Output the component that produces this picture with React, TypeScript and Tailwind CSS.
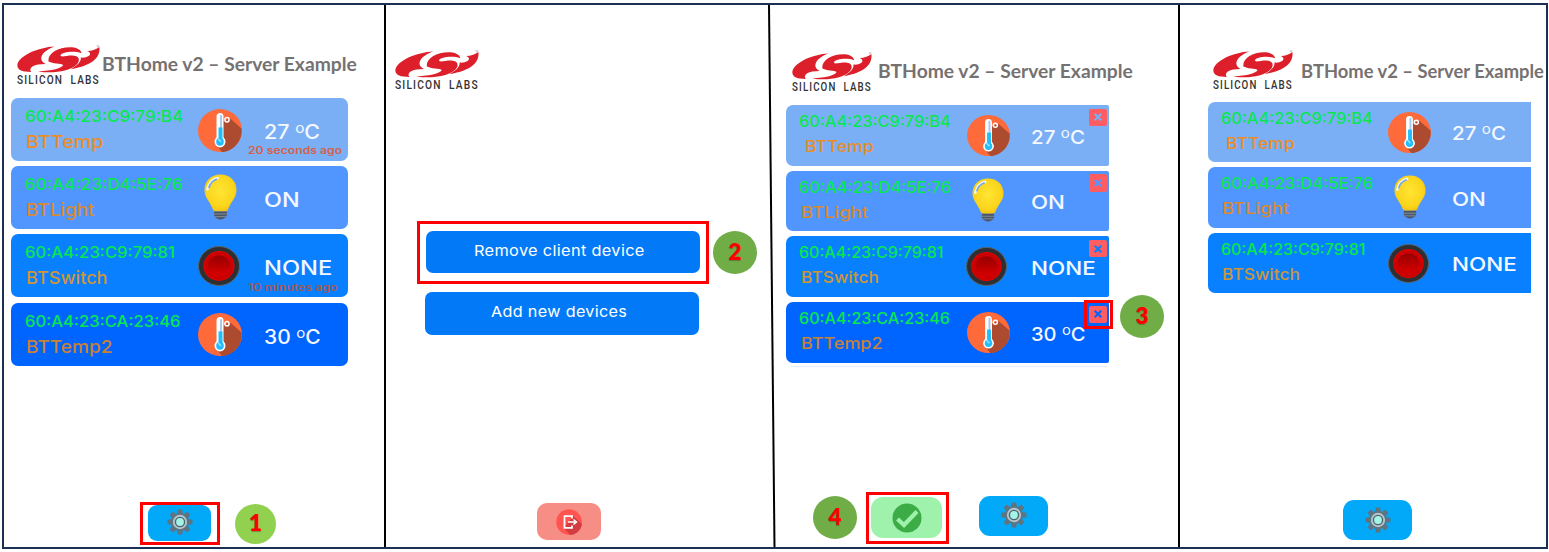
import { useLayoutEffect, useRef, useState } from "react";
import type { ReactNode } from "react";

/* Text stretched horizontally so that it fills an exact width. */
function Fit({ w, className = "", children }: { w: number; className?: string; children: ReactNode }) {
  const ref = useRef<HTMLSpanElement>(null);
  const [scale, setScale] = useState(1);
  useLayoutEffect(() => {
    if (ref.current) setScale(w / ref.current.offsetWidth);
  }, [w]);
  return (
    <div style={{ width: w }} className={"whitespace-nowrap " + className}>
      <span ref={ref} className="inline-block origin-left" style={{ transform: `scaleX(${scale})` }}>
        {children}
      </span>
    </div>
  );
}

function Logo({ w }: { w: number }) {
  return (
    <div className="flex shrink-0 flex-col" style={{ width: w }}>
      <svg viewBox="25 8 250 87" preserveAspectRatio="none" className="h-[28px] w-full">
        <g fill="#dc1f2b">
          <path d="M138 13C92 15 27 42 26 72C27 87 42 92 68 92C58 78 76 67 112 67C94 60 86 34 138 13Z" />
          <path d="M120 59C116 34 150 13 190 15C209 17 219 25 219 34C198 25 160 30 156 40C156 47 172 41 192 41C218 42 214 62 202 71C182 91 130 97 88 90C132 88 160 80 164 71C163 64 144 69 120 59Z" />
          <path d="M273 14C277 42 258 70 187 83C209 70 219 58 217 47C244 50 254 32 236 27C252 26 265 21 273 14Z" />
        </g>
        <circle cx="269" cy="11" r="3" fill="none" stroke="#999" strokeWidth="1.5" />
      </svg>
      <Fit w={w} className="mt-[1px] h-[12px] font-['Roboto'] text-[13px] leading-[12px] font-medium tracking-[1.5px] text-[#333]">
        SILICON&nbsp;&nbsp;LABS
      </Fit>
    </div>
  );
}

function Title({ w, className = "" }: { w: number; className?: string }) {
  return (
    <Fit w={w} className={"h-6 font-['Lato'] text-[18.5px] leading-6 font-bold text-[#767171] " + className}>
      BTHome v2 – Server Example
    </Fit>
  );
}

function Thermometer() {
  return (
    <svg viewBox="0 0 44 42" preserveAspectRatio="none" className="h-full w-full">
      <ellipse cx="22" cy="21" rx="22" ry="21" fill="#ff6a3a" />
      <path d="M32 9L43.500 19C45 31 35 41.500 24 42L18 35L25 27L25 12Z" fill="#ad4b31" />
      <rect x="18.500" y="4" width="7" height="28" rx="3.500" fill="#fff" />
      <circle cx="22" cy="32" r="5.500" fill="#fff" />
      <rect x="22" y="6" width="2" height="14" fill="#a9c9ee" />
      <rect x="20.500" y="18" width="4" height="14" fill="#22bdfb" />
      <circle cx="22" cy="32" r="3.800" fill="#22bdfb" />
      <path d="M20 29l3 3" stroke="#9ae4ff" strokeWidth="1.500" />
      <circle cx="29" cy="10.500" r="2.100" fill="none" stroke="#fff" strokeWidth="1.500" />
    </svg>
  );
}

function Bulb() {
  return (
    <svg viewBox="0 0 34 46" preserveAspectRatio="none" className="h-full w-full">
      <defs>
        <radialGradient id="glass" cx="0.5" cy="0.45" r="0.6">
          <stop offset="0" stopColor="#ffe533" />
          <stop offset="0.7" stopColor="#fbd51c" />
          <stop offset="1" stopColor="#edbd13" />
        </radialGradient>
      </defs>
      <path d="M17 0.500C7 0.500 0.500 7 0.500 16C0.500 24 6 27 9 35Q10 37.500 12 37.500H22Q24 37.500 25 35C28 27 33.500 24 33.500 16C33.500 7 27 0.500 17 0.500Z" fill="url(#glass)" />
      <path d="M3.500 15.500Q5.500 6 14 4" fill="none" stroke="#eef6ff" strokeWidth="2.600" strokeLinecap="round" />
      <path d="M5 14Q6.500 7.500 13.500 5" fill="none" stroke="#7aa7e0" strokeWidth="1.800" />
      <path d="M10.500 37.500H23.500V41.500Q23 43.500 20.500 44.500Q17 46.500 13.500 44.500Q11 43.500 10.500 41.500Z" fill="#4a5568" />
      <path d="M10.500 40H23.500M11 42.700H23" stroke="#85909b" strokeWidth="1" />
    </svg>
  );
}

function PushButton() {
  return (
    <svg viewBox="0 0 42 40" preserveAspectRatio="none" className="h-full w-full">
      <defs>
        <linearGradient id="cap" x1="0" y1="0" x2="0" y2="1">
          <stop offset="0" stopColor="#960000" />
          <stop offset="1" stopColor="#d80000" />
        </linearGradient>
      </defs>
      <ellipse cx="21" cy="20" rx="20.500" ry="19.500" fill="#2c3032" stroke="#5b6266" strokeWidth="1" />
      <ellipse cx="21" cy="20" rx="15.600" ry="15" fill="#e00505" />
      <ellipse cx="21" cy="20" rx="14.600" ry="14" fill="#cc0000" />
      <ellipse cx="21" cy="19.500" rx="11" ry="10" fill="url(#cap)" />
    </svg>
  );
}

function Gear() {
  const teeth = [0, 45, 90, 135, 180, 225, 270, 315];
  return (
    <svg viewBox="-13 -13 26 26" className="h-[26px] w-[26px]">
      <g fill="#5d7583">
        {teeth.map((a) => (
          <path key={a} d="M-3 -7.500L-2.200 -12.500H2.200L3 -7.500Z" transform={`rotate(${a})`} />
        ))}
        <circle r="9" />
      </g>
      <circle r="6.200" fill="#4c6470" stroke="#b4c5cb" strokeWidth="1.900" />
      <circle r="3.900" fill="#a2f5e6" />
    </svg>
  );
}

type Device = { mac: string; name: string; value: string; kind: string; bg: string; fg: string; nameColor: string };

const devices: Device[] = [
  { mac: "60:A4:23:C9:79:B4", name: "BTTemp", value: "27", kind: "temp", bg: "bg-[#7aaff5]", fg: "text-[#7aaff5]", nameColor: "text-[#e98d2b]" },
  { mac: "60:A4:23:D4:5E:76", name: "BTLight", value: "ON", kind: "light", bg: "bg-[#5196ff]", fg: "text-[#5196ff]", nameColor: "text-[#d9892f]" },
  { mac: "60:A4:23:C9:79:81", name: "BTSwitch", value: "NONE", kind: "switch", bg: "bg-[#0880ff]", fg: "text-[#0880ff]", nameColor: "text-[#cf9636]" },
  { mac: "60:A4:23:CA:23:46", name: "BTTemp2", value: "30", kind: "temp", bg: "bg-[#0064ff]", fg: "text-[#0064ff]", nameColor: "text-[#c98135]" },
];

const wideMac = [158, 158, 150, 156];
const wideName = [78, 69, 82, 86];
const wideValue = [56, 36, 68, 57];
const wideTime = ["20 seconds ago", "", "10 minutes ago", ""];
const slimMac = [152, 152, 145, 151];
const slimName = [69, 67, 78, 82];
const slimValue = [54, 34, 65, 55];

function Value({ d }: { d: Device }) {
  if (d.kind !== "temp") return <>{d.value}</>;
  return (
    <>
      {d.value} <span className="relative -top-[6px] text-[14px] leading-none font-normal">o</span>C
    </>
  );
}

function DeviceIcon({ kind, slim }: { kind: string; slim?: boolean }) {
  if (kind === "temp")
    return (
      <div className={slim ? "mt-[10px] h-[41px] w-[43px]" : "mt-[10.5px] h-[43px] w-[44px]"}>
        <Thermometer />
      </div>
    );
  if (kind === "light")
    return (
      <div className={slim ? "mt-[7.5px] ml-[5.5px] h-[44px] w-[32px]" : "mt-[8px] ml-[6px] h-[46px] w-[33px]"}>
        <Bulb />
      </div>
    );
  return (
    <div className={slim ? "mt-[11px] -ml-[0.5px] h-[39px] w-[41px]" : "mt-[11.5px] -ml-[0.5px] h-[40px] w-[42px]"}>
      <PushButton />
    </div>
  );
}

function WideCard({ d, i }: { d: Device; i: number }) {
  return (
    <div className={"flex h-[63px] w-[337px] rounded-[7px] " + d.bg}>
      <div className="ml-[14px] w-[173px] pt-[6px]">
        <Fit w={wideMac[i]} className="h-6 text-[16px] leading-6 font-medium text-[#08e84e]">{d.mac}</Fit>
        <Fit w={wideName[i]} className={"mt-[2px] ml-[0.5px] h-6 text-[17.5px] leading-6 font-medium " + d.nameColor}>{d.name}</Fit>
      </div>
      <div className="w-[50px]">
        <DeviceIcon kind={d.kind} />
      </div>
      <div className="pt-[22px]">
        <Fit w={wideValue[i]} className="ml-[15.5px] h-6 text-[19.5px] leading-6 font-medium text-[#f4f8ff]">
          <Value d={d} />
        </Fit>
        {wideTime[i] && (
          <Fit w={i === 0 ? 94 : 90} className={"h-3 text-[10px] leading-3 font-semibold " + (i === 0 ? "text-[#d65f49]" : "mt-px text-[#a3594f]")}>
            {wideTime[i]}
          </Fit>
        )}
      </div>
    </div>
  );
}

function SlimCard({ d, i, removable }: { d: Device; i: number; removable?: boolean }) {
  return (
    <div className={"relative flex h-[60.5px] w-[323px] rounded-l-[7px] " + (removable ? "rounded-r-[2px] " : "") + d.bg}>
      <div className="ml-[13px] w-[167.500px] pt-[5px]">
        <Fit w={slimMac[i]} className="h-6 text-[15.5px] leading-6 font-medium text-[#08e84e]">{d.mac}</Fit>
        <Fit w={slimName[i]} className={"h-6 text-[16px] leading-6 font-medium " + d.nameColor + (i === 0 ? " ml-[5.5px]" : " ml-[1.5px]")}>
          {d.name}
        </Fit>
      </div>
      <div className="w-[64px]">
        <DeviceIcon kind={d.kind} slim />
      </div>
      <Fit w={slimValue[i]} className="mt-[20.5px] h-6 text-[19px] leading-6 font-medium text-[#f4f8ff]">
        <Value d={d} />
      </Fit>
      {removable && (
        <div className={"absolute top-[3.5px] right-[2px] flex h-[17.5px] w-[18px] items-center justify-center rounded-[2px] bg-[#ff5d62] " + d.fg}>
          <svg viewBox="0 0 8 8" className="h-[8px] w-[8px]">
            <path d="M0.700 0.700L7.300 7.300M7.300 0.700L0.700 7.300" stroke="currentColor" strokeWidth="2.100" />
          </svg>
        </div>
      )}
    </div>
  );
}

function Step({ n, className }: { n: number; className: string }) {
  return (
    <div className={"absolute flex items-center justify-center rounded-[50%] pb-px font-['Lato'] text-[22.5px] leading-none font-extrabold text-[#fe0000] " + className}>
      <span className="[text-shadow:0_1px_1px_rgba(60,60,60,0.4)]">{n}</span>
    </div>
  );
}

function RedBox({ className }: { className: string }) {
  return <div className={"absolute border-[3px] border-[#fe0000] " + className} />;
}

export default function App() {
  return (
    <main className="h-[552px] w-[1549px] overflow-hidden bg-white pt-[3px] pl-[2px] font-['Inter',sans-serif]">
      <div className="flex h-[546px] w-[1546px] border-2 border-[#1b3054]">
        <section className="relative flex w-[380px] shrink-0 flex-col">
          <div className="flex pt-[40px] pl-[13px]">
            <Logo w={83} />
            <Title w={255} className="mt-[7px] ml-[1.5px]" />
          </div>
          <div className="mt-[12px] ml-[7px] flex flex-col gap-[5.2px]">
            {devices.map((d, i) => (
              <WideCard key={d.mac} d={d} i={i} />
            ))}
          </div>
          <button className="mt-auto mb-[6px] ml-[144px] flex h-[36px] w-[63px] items-center justify-center rounded-[9px] bg-[#03a9f9] pb-[2px]">
            <Gear />
          </button>
          <RedBox className="top-[497px] left-[136px] h-[43px] w-[80px]" />
          <Step n={1} className="top-[499px] left-[231px] h-[40px] w-[41px] bg-[#92d050]" />
        </section>

        <div className="w-[2px] shrink-0 bg-black" />

        <section className="relative flex w-[382px] shrink-0 flex-col text-white">
          <div className="flex pt-[45px] pl-[9px]">
            <Logo w={84} />
          </div>
          <button className="mt-[140px] ml-[40px] flex h-[42px] w-[274px] justify-center rounded-[7px] bg-[#027af8] pt-[8px] pr-[8px]">
            <Fit w={171} className="h-6 text-left text-[15px] leading-6 tracking-[0.3px]">Remove client device</Fit>
          </button>
          <button className="mt-[19px] ml-[39px] flex h-[42.5px] w-[274px] justify-center rounded-[7px] bg-[#027af8] pt-[8px] pr-[7px]">
            <Fit w={136} className="h-6 text-left text-[15px] leading-6 tracking-[0.3px]">Add new devices</Fit>
          </button>
          <button className="mt-auto mb-[7px] ml-[151px] flex h-[37px] w-[64px] items-center justify-center rounded-[10px] bg-[#f68e85]">
            <svg viewBox="0 0 26 26" className="h-[26px] w-[26px]">
              <circle cx="13" cy="13" r="12.800" fill="#ff5450" />
              <path d="M17 7L26 15C25 22 19 26 14 26L8 19Z" fill="#d33c43" />
              <path d="M16 9.500V7.200H8.500V18.800H16V16.500" fill="none" stroke="#fff" strokeWidth="1.800" />
              <path d="M12 13H20M17.500 10.500L20.500 13L17.500 15.500" fill="none" stroke="#fff" strokeWidth="1.500" />
            </svg>
          </button>
          <RedBox className="top-[216px] left-[31px] h-[63px] w-[292px]" />
          <Step n={2} className="top-[226px] left-[327px] h-[43px] w-[44px] bg-[#70ad47]" />
        </section>

        <svg viewBox="0 0 8 542" className="h-[542px] w-[8px] shrink-0">
          <path d="M1 0L6.500 542" stroke="#000" strokeWidth="2" />
        </svg>

        <section className="relative flex w-[402px] shrink-0 flex-col">
          <div className="flex pt-[47px] pl-[16px]">
            <Logo w={80} />
            <Title w={255} className="mt-[7px] ml-[6px]" />
          </div>
          <div className="mt-[12px] ml-[10px] flex flex-col gap-[5.2px]">
            {devices.map((d, i) => (
              <SlimCard key={d.mac} d={d} i={i} removable />
            ))}
          </div>
          <div className="mt-[3px] ml-[15px] h-px w-[316px] bg-[#e9ecff]" />
          <div className="mt-auto mb-[9px] ml-[95px] flex items-start gap-[37px]">
            <button className="mt-px flex h-[41px] w-[71px] items-center justify-center rounded-[12px] bg-[#9ff2ac]">
              <svg viewBox="0 0 30 30" className="h-[30px] w-[30px]">
                <circle cx="15" cy="15" r="14.500" fill="#3cac46" />
                <path d="M5.500 16L12 22L25 8.500" fill="none" stroke="#9ff2ac" strokeWidth="4.200" />
              </svg>
            </button>
            <button className="flex h-[39.5px] w-[69px] items-center justify-center rounded-[11px] bg-[#03a9f9] pb-px">
              <Gear />
            </button>
          </div>
          <RedBox className="top-[295px] left-[308px] h-[29px] w-[29px]" />
          <Step n={3} className="top-[290px] left-[344px] h-[43px] w-[44px] bg-[#70ad47]" />
          <RedBox className="top-[487px] left-[90px] h-[52px] w-[83px]" />
          <Step n={4} className="top-[491px] left-[37px] h-[43px] w-[44px] bg-[#70ad47]" />
        </section>

        <div className="w-[2px] shrink-0 bg-black" />

        <section className="flex min-w-0 flex-1 flex-col">
          <div className="flex pt-[45px] pl-[33px]">
            <Logo w={80} />
            <Title w={243} className="mt-[8.5px] ml-[8px]" />
          </div>
          <div className="mt-[10.500px] ml-[27.500px] flex flex-col gap-[5.2px]">
            {devices.slice(0, 3).map((d, i) => (
              <SlimCard key={d.mac} d={d} i={i} />
            ))}
          </div>
          <button className="mt-auto mb-[7px] ml-[163px] flex h-[40px] w-[69px] items-center justify-center rounded-[11px] bg-[#03a9f9]">
            <Gear />
          </button>
        </section>
      </div>
    </main>
  );
}
